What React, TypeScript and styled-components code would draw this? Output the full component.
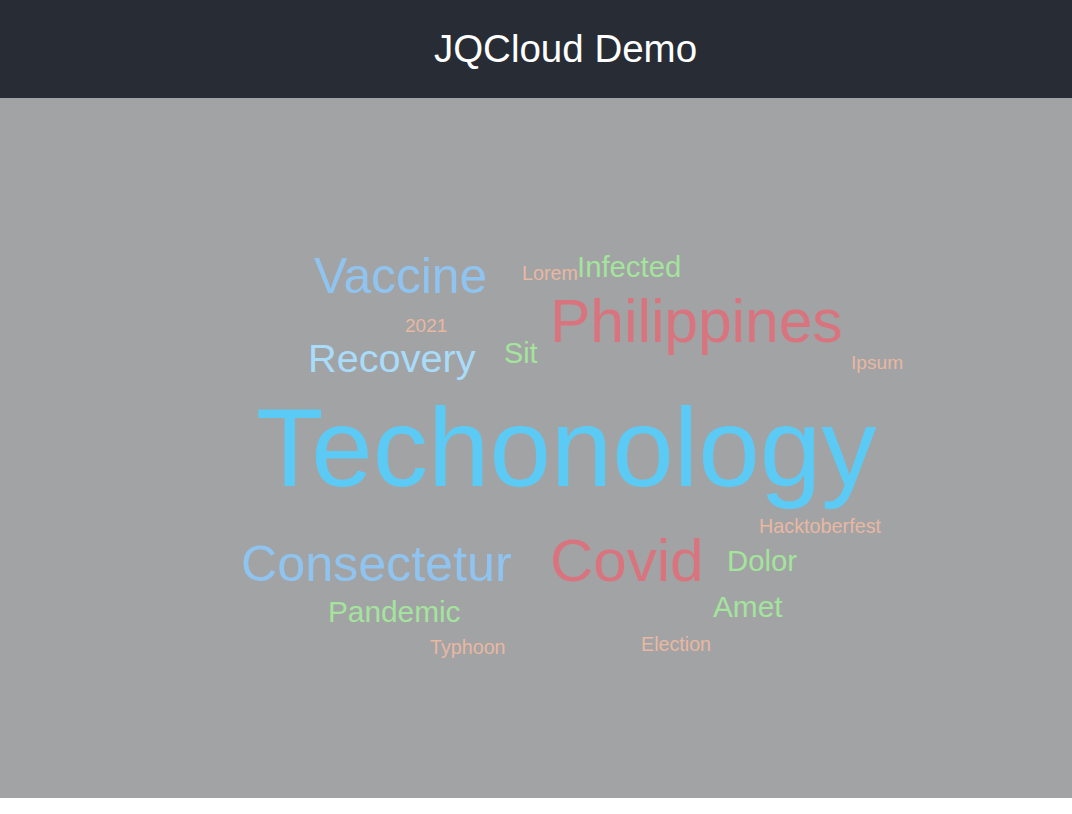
import React from 'react'
import styled, { createGlobalStyle } from 'styled-components'

const GlobalStyle = createGlobalStyle`
  body {
    margin: 0;
    background-color: #FFF;
    font-family: "Liberation Sans", Arial, Helvetica, sans-serif;
  }
`

const Page = styled.div`
  width: 100%;
  display: flex;
  flex-direction: column;
`

const Header = styled.header`
  height: 98px;
  background-color: #282C34;
  display: flex;
  align-items: center;
  justify-content: center;
  padding-left: 59px;
  box-sizing: border-box;
`

const Title = styled.h1`
  margin: 0;
  font-weight: 400;
  font-size: 38.5px;
  line-height: 1;
  color: #FFF;
`

const CloudArea = styled.section`
  height: 700px;
  background-color: #A2A3A5;
  position: relative;
  overflow: hidden;
`

const Word = styled.span<{ $size: number, $color: string, $x: number, $y: number }>`
  position: absolute;
  left: ${p => p.$x}px;
  top: ${p => p.$y}px;
  font-size: ${p => p.$size}px;
  color: ${p => p.$color};
  line-height: 1;
  white-space: nowrap;
  cursor: default;
`

const BLUE = '#5BCBF6'
const SKY = '#90C4F0'
const PALE = '#A8DCFA'
const RED = '#D9747E'
const GREEN = '#A4E49C'
const PEACH = '#E8B8A2'

type CloudWord = {
  text: string
  size: number
  color: string
  x: number
  y: number
}

// placements measured off the rendered cloud
const words: CloudWord[] = [
  { text: 'Techonology', size: 110.5, color: BLUE, x: 256, y: 295 },
  { text: 'Vaccine', size: 49.7, color: SKY, x: 314, y: 154 },
  { text: 'Lorem', size: 19.7, color: PEACH, x: 522, y: 166 },
  { text: 'Infected', size: 29.3, color: GREEN, x: 577, y: 154 },
  { text: 'Philippines', size: 60.5, color: RED, x: 550, y: 193 },
  { text: '2021', size: 19, color: PEACH, x: 405, y: 218 },
  { text: 'Recovery', size: 39.7, color: PALE, x: 308, y: 241 },
  { text: 'Sit', size: 28.8, color: GREEN, x: 504, y: 241 },
  { text: 'Ipsum', size: 19.2, color: PEACH, x: 851, y: 255 },
  { text: 'Hacktoberfest', size: 19.8, color: PEACH, x: 759, y: 419 },
  { text: 'Consectetur', size: 50.2, color: SKY, x: 241, y: 441 },
  { text: 'Covid', size: 60, color: RED, x: 550, y: 433 },
  { text: 'Dolor', size: 29.3, color: GREEN, x: 727, y: 448 },
  { text: 'Pandemic', size: 29.8, color: GREEN, x: 328, y: 499 },
  { text: 'Amet', size: 29.8, color: GREEN, x: 713, y: 494 },
  { text: 'Typhoon', size: 19.7, color: PEACH, x: 430, y: 540 },
  { text: 'Election', size: 19.7, color: PEACH, x: 641, y: 537 },
]

export default function App () {
  return (
    <Page>
      <GlobalStyle />
      <Header>
        <Title>JQCloud Demo</Title>
      </Header>
      <CloudArea>
        {words.map(w => (
          <Word key={w.text} $size={w.size} $color={w.color} $x={w.x} $y={w.y}>
            {w.text}
          </Word>
        ))}
      </CloudArea>
    </Page>
  )
}
